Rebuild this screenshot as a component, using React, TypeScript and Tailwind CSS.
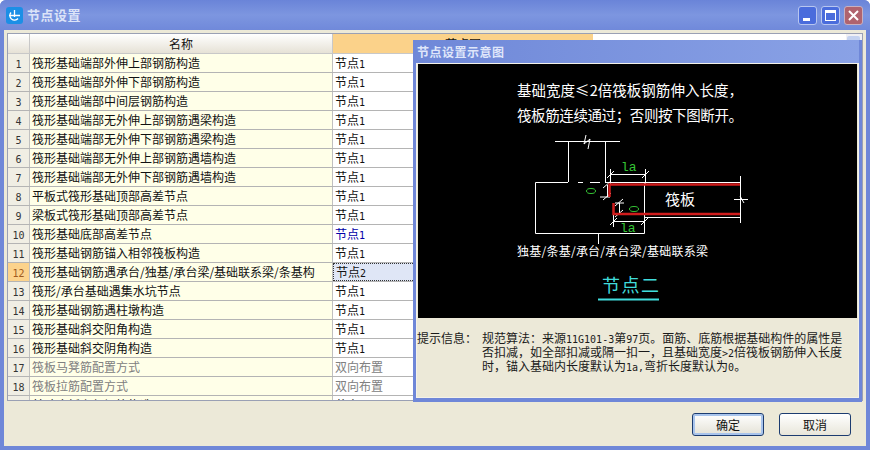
import React from "react";

const rows = [
  { name: "筏形基础端部外伸上部钢筋构造", value: "节点", no: "1" },
  { name: "筏形基础端部外伸下部钢筋构造", value: "节点", no: "1" },
  { name: "筏形基础端部中间层钢筋构造", value: "节点", no: "1" },
  { name: "筏形基础端部无外伸上部钢筋遇梁构造", value: "节点", no: "1" },
  { name: "筏形基础端部无外伸下部钢筋遇梁构造", value: "节点", no: "1" },
  { name: "筏形基础端部无外伸上部钢筋遇墙构造", value: "节点", no: "1" },
  { name: "筏形基础端部无外伸下部钢筋遇墙构造", value: "节点", no: "1" },
  { name: "平板式筏形基础顶部高差节点", value: "节点", no: "1" },
  { name: "梁板式筏形基础顶部高差节点", value: "节点", no: "1" },
  { name: "筏形基础底部高差节点", value: "节点", no: "1", blue: true },
  { name: "筏形基础钢筋锚入相邻筏板构造", value: "节点", no: "1" },
  { name: "筏形基础钢筋遇承台/独基/承台梁/基础联系梁/条基构", value: "节点", no: "2", selected: true },
  { name: "筏形/承台基础遇集水坑节点", value: "节点", no: "1" },
  { name: "筏形基础钢筋遇柱墩构造", value: "节点", no: "1" },
  { name: "筏形基础斜交阳角构造", value: "节点", no: "1" },
  { name: "筏形基础斜交阴角构造", value: "节点", no: "1" },
  { name: "筏板马凳筋配置方式", value: "双向布置", no: "", muted: true },
  { name: "筏板拉筋配置方式", value: "双向布置", no: "", muted: true },
  { name: "基础底板上部钢筋构造", value: "节点", no: "1" },
];

// digits in the original are a narrow 6px bitmap face
const Num = ({ children }: { children: React.ReactNode }) => (
  <span className="font-['DejaVu_Sans_Mono',monospace] text-[10px]">{children}</span>
);

const Diagram = () => (
  <svg viewBox="418 63 439 254" className="block w-[439px] h-[254px] bg-black" fill="none">
    <g stroke="#ffffff" strokeWidth="1">
      <path d="M555 140.5H620M568.5 140V181M605.5 140V181M586 134L584 143L590 138L588 148" />
      <path d="M568 181.5H535.5V232.5H644.5V181M578 181.5H583M590 181.5H600M605 181.5H740M644 216.5H740" />
      <path d="M598.5 232V243M740.5 175V222M734 198.5H748M740 195L744 202" />
      <path d="M610 173.5H646M610.5 168V183M645.5 168V183M607 177L614 170M642 177L649 170" />
      <path d="M613 220.5H645M613.5 214V226M644.5 214V226M610 224L617 217M641 224L648 217" />
      <path d="M607.5 184V196M600 196H610M603 187L611 180M603 199L611 192" />
      <path d="M619.5 202V213M615 202H624M615 205L623 198M615 216L623 209" />
    </g>
    <path d="M609.5 196V183.5H740M613.5 202V213H740" stroke="#d01c1c" strokeWidth="2.5" />
    <ellipse cx="591" cy="190" rx="4.5" ry="2.5" stroke="#35c435" />
    <ellipse cx="634" cy="208" rx="4.5" ry="2.5" stroke="#35c435" />
    <path d="M598 298.5H659" stroke="#40dcdc" strokeWidth="2" />
    <g className="font-['Noto_Sans_CJK_SC',sans-serif]" fill="#ffffff">
      <text x="517" y="95" fontSize="14.5" textLength="226">基础宽度≤2倍筏板钢筋伸入长度，</text>
      <text x="517" y="120" fontSize="14.5" textLength="226">筏板筋连续通过；否则按下图断开。</text>
      <text x="665" y="204" fontSize="15" textLength="30">筏板</text>
      <text x="517" y="255" fontSize="12" textLength="191">独基/条基/承台/承台梁/基础联系梁</text>
      <text x="602" y="291" fontSize="18" textLength="57" fill="#40dcdc">节点二</text>
    </g>
    <g className="font-['Liberation_Mono',monospace]" fill="#35c435" fontSize="13">
      <text x="621" y="170">la</text>
      <text x="620" y="231">la</text>
    </g>
  </svg>
);

const NodeDialog = () => (
  <div className="absolute left-[413px] top-[40px] w-[449px] h-[362px] bg-[#6f87d8] px-[3px] pb-[4px] flex flex-col">
    <div className="h-[23px] shrink-0 pl-[1px] flex items-center text-[12px] font-bold tracking-[0.5px] text-[#dfe6fa] bg-gradient-to-r from-[#6f88d8] to-[#8aa2e6]">
      节点设置示意图
    </div>
    <div className="flex-1 flex flex-col bg-[#ece9d8] border border-[#f4f2e8] pl-[1px] pr-[1px]">
      <Diagram />
      <div className="flex pt-[14px] -ml-[1px] text-[12px] leading-[12px] text-[#1a1a1a]">
        <div className="w-[65px]">提示信息：</div>
        <div className="whitespace-nowrap">
          <div>规范算法：来源<Num>11G101-3</Num>第<Num>97</Num>页。面筋、底筋根据基础构件的属性是</div>
          <div>否扣减，如全部扣减或隔一扣一，且基础宽度<Num>&gt;2</Num>倍筏板钢筋伸入长度</div>
          <div>时，锚入基础内长度默认为<Num>1a,</Num>弯折长度默认为<Num>0</Num>。</div>
        </div>
      </div>
    </div>
  </div>
);

export default function App() {
  return (
    <div className="relative w-[870px] h-[450px] overflow-hidden flex flex-col bg-[#6f87d8] rounded-t-[6px] font-['Noto_Sans_CJK_SC',sans-serif] text-[12px] text-[#111]">
      {/* title bar */}
      <div className="h-[30px] shrink-0 flex items-center pl-[6px] pr-[7px] bg-gradient-to-b from-[#6a84d8] via-[#7d96e0] to-[#7089da]">
        <svg width="17" height="17" viewBox="0 0 17 17" fill="none">
          <rect width="17" height="17" rx="3" fill="#1b8fe6" />
          <path d="M3 8.5H14M8.5 3V10M5 5.5A4.5 4.5 0 0 0 12 11.5" stroke="#fff" strokeWidth="1.3" />
        </svg>
        <span className="ml-[4px] text-[13px] font-bold tracking-[0.5px] text-[#dbe3f8]">节点设置</span>
        <div className="ml-auto flex gap-[4px]">
          <div className="w-[19px] h-[19px] rounded-[3px] border border-[#b8c6f0] bg-[#4a6cdc] flex items-end pl-[4px] pb-[3px]">
            <div className="w-[7px] h-[3px] bg-white" />
          </div>
          <div className="w-[19px] h-[19px] rounded-[3px] border border-[#b8c6f0] bg-[#4a6cdc] flex items-center justify-center">
            <div className="w-[11px] h-[11px] border border-t-[3px] border-white" />
          </div>
          <div className="w-[19px] h-[19px] rounded-[3px] border border-[#c8b0c0] bg-[#b0636e] flex items-center justify-center">
            <svg width="11" height="11" viewBox="0 0 11 11">
              <path d="M1 1L10 10M10 1L1 10" stroke="#fff" strokeWidth="2" />
            </svg>
          </div>
        </div>
      </div>

      {/* body */}
      <div className="flex-1 mx-[4px] mb-[4px] bg-[#ece9d8] flex flex-col px-[3px] pt-[3px]">
        <div className="h-[368px] shrink-0 overflow-hidden border border-[#9aa0b4] bg-white relative">
          <div className="flex h-[20px] border-b border-[#c8c8c8]">
            <div className="w-[22px] shrink-0 border-r border-[#c8c8c8] bg-gradient-to-b from-white to-[#e6e2d6]" />
            <div className="w-[303px] shrink-0 border-r border-[#c8c8c8] text-center leading-[19px] bg-gradient-to-b from-white to-[#e6e2d6]">名称</div>
            <div className="w-[260px] shrink-0 text-center leading-[19px] bg-[#fbd28a]">节点图</div>
            <div className="flex-1" />
            <div className="w-[16px] shrink-0 bg-[#f0f0f4] pt-[2px] pl-[1px]">
              <div className="w-[13px] h-[14px] rounded-[2px] bg-[#c4d2f0]" />
            </div>
          </div>
          {rows.map((row, i) => (
            <div key={i} className="flex h-[19px] border-b border-[#b4b4b4] leading-[18px]">
              <div
                className={`w-[22px] shrink-0 border-r border-[#c0c0c0] text-center ${
                  row.selected ? "bg-[#fcd38c] text-[#a05a20]" : "bg-[#f0eee4] text-[#333]"
                }`}
              >
                <Num>{i + 1}</Num>
              </div>
              <div className={`w-[303px] shrink-0 border-r border-[#c0c0c0] bg-[#ffffe8] pl-[2px] whitespace-nowrap overflow-hidden ${row.muted ? "text-[#808080]" : ""}`}>
                {row.name}
              </div>
              <div
                className={`w-[260px] shrink-0 pl-[2px] ${
                  row.selected ? "bg-[#dfe6f6] border border-dotted border-[#333] leading-[16px] pl-[1px]" : ""
                } ${row.muted ? "text-[#808080]" : ""} ${row.blue ? "text-[#0000a8]" : ""}`}
              >
                {row.value}
                {row.no && <Num>{row.no}</Num>}
              </div>
            </div>
          ))}
        </div>

        {/* buttons */}
        <div className="flex justify-end gap-[15px] pt-[12px] pr-[12px]">
          <button className="w-[72px] h-[23px] rounded-[3px] border border-[#1c3c70] bg-gradient-to-b from-white to-[#e4e2d6] shadow-[inset_0_0_0_2px_#a8c4ec] text-[12px]">
            确定
          </button>
          <button className="w-[72px] h-[23px] rounded-[3px] border border-[#1c3c70] bg-gradient-to-b from-white to-[#e8e6da] text-[12px]">
            取消
          </button>
        </div>
      </div>

      <NodeDialog />
    </div>
  );
}
